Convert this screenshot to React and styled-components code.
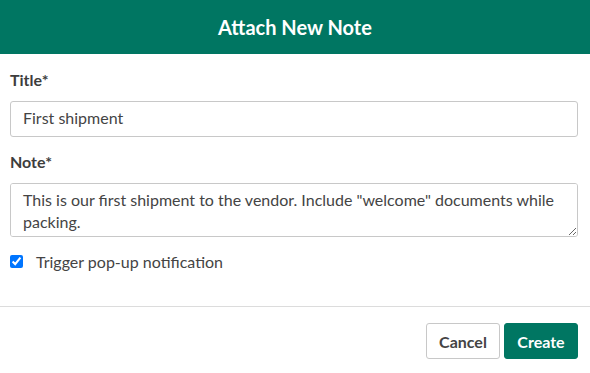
import React from "react";
import styled, { createGlobalStyle } from "styled-components";

const Global = createGlobalStyle`
  html, body { margin: 0; padding: 0; background: #fff; }
  body { font-family: Lato, "Open Sans", sans-serif; }
  * { box-sizing: border-box; }
`;

const Dialog = styled.div`
  width: 590px;
  height: 373px;
  display: flex;
  flex-direction: column;
  background: #fff;
`;

const Header = styled.header`
  height: 54px;
  background: #007662;
  color: #fff;
  display: flex;
  align-items: center;
  justify-content: center;
  font-size: 20px;
  font-weight: 700;
`;

const Body = styled.div`
  padding: 16px 12px 0 10px;
  display: flex;
  flex-direction: column;
`;

const Label = styled.label`
  font-size: 16px;
  font-weight: 700;
  color: #3d3d3d;
  line-height: 20px;
  margin-bottom: 11px;
`;

const Input = styled.input`
  width: 100%;
  height: 36px;
  border: 1px solid #c8c8c8;
  border-radius: 3px;
  padding: 0 12px 3px;
  font-family: Lato, sans-serif;
  font-size: 16px;
  color: #444;
  margin-bottom: 15px;
  outline: none;
`;

const TextArea = styled.textarea`
  width: 100%;
  height: 54px;
  border: 1px solid #c8c8c8;
  border-radius: 3px;
  padding: 5px 12px;
  font-family: Lato, sans-serif;
  font-size: 16px;
  line-height: 22px;
  color: #444;
  resize: both;
  outline: none;
  display: block;
`;

const CheckRow = styled.label`
  display: flex;
  align-items: center;
  gap: 13px;
  margin-top: 15px;
  font-size: 16px;
  color: #444;
`;

const Check = styled.input`
  margin: 0;
  width: 13px;
  height: 13px;
`;

const Footer = styled.footer`
  margin-top: auto;
  border-top: 1px solid #dcdcdc;
  height: 67px;
  display: flex;
  justify-content: flex-end;
  align-items: flex-start;
  gap: 4px;
  padding: 16px 12px 0 0;
`;

const Button = styled.button`
  height: 36px;
  width: 74px;
  border-radius: 3px;
  font-family: Lato, sans-serif;
  font-size: 16px;
  font-weight: 700;
  cursor: pointer;
  border: 1px solid ${(p) => (p.$primary ? "#007662" : "#c8c8c8")};
  background: ${(p) => (p.$primary ? "#007662" : "#fff")};
  color: ${(p) => (p.$primary ? "#fff" : "#444")};
`;

export default function App() {
  return (
    <Dialog>
      <Global />
      <Header>Attach New Note</Header>
      <Body>
        <Label>Title*</Label>
        <Input defaultValue="First shipment" />
        <Label>Note*</Label>
        <TextArea defaultValue={'This is our first shipment to the vendor. Include "welcome" documents while packing.'} />
        <CheckRow>
          <Check type="checkbox" defaultChecked />
          Trigger pop-up notification
        </CheckRow>
      </Body>
      <Footer>
        <Button>Cancel</Button>
        <Button $primary>Create</Button>
      </Footer>
    </Dialog>
  );
}
